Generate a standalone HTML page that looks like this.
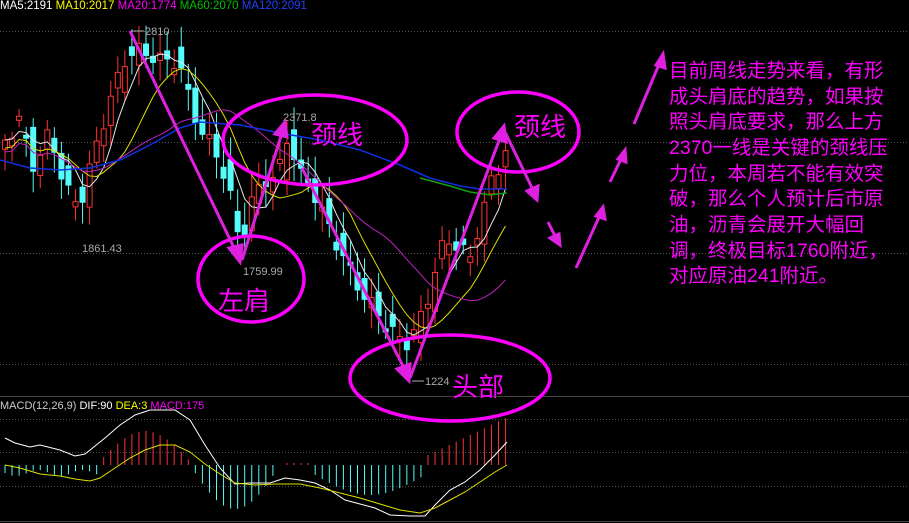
<!DOCTYPE html>
<html><head><meta charset="utf-8"><style>
html,body{margin:0;padding:0;background:#000;width:909px;height:523px;overflow:hidden}
svg{display:block}
.t{font-family:"Liberation Sans",sans-serif;font-size:11px}
.cn{font-family:"Liberation Sans","Noto Sans CJK SC",sans-serif;fill:#ff00ff}
</style></head><body>
<svg id="s" width="909" height="523" xmlns="http://www.w3.org/2000/svg">
<rect width="909" height="523" fill="#000"/>
<g stroke="#555" stroke-dasharray="1,2" stroke-width="1">
<line x1="0" y1="31.5" x2="909" y2="31.5"/><line x1="0" y1="142.5" x2="909" y2="142.5"/>
<line x1="0" y1="253.5" x2="909" y2="253.5"/><line x1="0" y1="364.5" x2="909" y2="364.5"/>
<line x1="0" y1="419.5" x2="909" y2="419.5"/><line x1="0" y1="452.5" x2="909" y2="452.5"/>
<line x1="0" y1="486.5" x2="909" y2="486.5"/>
</g>
<line x1="0" y1="396.5" x2="909" y2="396.5" stroke="#444"/>
<line x1="0" y1="521.5" x2="909" y2="521.5" stroke="#444"/>
<g id="cand"></g>
<g id="mac"></g>
<polyline fill="none" stroke="#1030e0" stroke-width="1.5" points="0,160 30,168 60,170 90,168 120,160 150,145 180,128 200,122 240,125 280,133 320,140 360,150 400,165 430,178 460,186 480,189 507,189"/>
<polyline fill="none" stroke="#10a010" stroke-width="1.5" points="420,178 450,186 470,192 490,195 507,193"/>
<polyline fill="none" stroke="#ffffff" stroke-width="1" points="5,438 15,443 30,447 40,445 60,450 75,456 85,454 95,446 105,438 120,425 135,415 150,410 175,410 190,420 205,445 220,468 235,484 250,483 270,483 285,478 300,480 315,483 330,490 345,500 360,504 375,508 390,515 410,516 425,516 435,505 450,490 465,482 480,470 495,455 507,442"/>
<polyline fill="none" stroke="#e0e000" stroke-width="1" points="5,465 20,468 40,474 60,476 75,479 90,481 100,478 115,468 130,458 145,450 160,445 175,445 190,452 205,464 220,474 235,483 255,485 275,484 300,484 320,488 340,493 360,498 380,504 400,510 420,513 435,508 450,500 465,492 480,482 495,472 507,465"/>
<g class="t" fill="#fff">
<text x="0" y="9" font-size="11.5"><tspan fill="#fff">MA5:2191</tspan> <tspan fill="#ffff00">MA10:2017</tspan> <tspan fill="#ff00ff">MA20:1774</tspan> <tspan fill="#00c000">MA60:2070</tspan> <tspan fill="#2040ff">MA120:2091</tspan></text>
<text x="0" y="409" fill="#ccc">MACD(12,26,9) <tspan fill="#fff">DIF:90</tspan> <tspan fill="#ffff00">DEA:3</tspan> <tspan fill="#ff00ff">MACD:175</tspan></text>
<text x="145" y="35" fill="#aaa">2810</text>
<text x="82" y="252" fill="#aaa">1861.43</text>
<text x="243" y="275" fill="#aaa">1759.99</text>
<text x="283" y="121" fill="#aaa">2371.8</text>
<text x="425" y="385" fill="#aaa">1224</text>
</g>
<g stroke="#aaa" stroke-width="1"><line x1="132" y1="31" x2="144" y2="31"/><line x1="412" y1="381" x2="424" y2="381"/></g>
<g fill="none" stroke="#ff00ff" stroke-width="3.5">
<ellipse cx="251" cy="279" rx="53" ry="43"/>
<ellipse cx="315" cy="140" rx="92" ry="45"/>
<ellipse cx="518" cy="132" rx="61" ry="40"/>
<ellipse cx="450" cy="378" rx="100" ry="43"/>
</g>
<g stroke="#e020e0" stroke-width="3" fill="#e020e0">
<line x1="130" y1="31" x2="236" y2="252"/><polygon points="240,262 229,248 242,245"/>
<line x1="242" y1="260" x2="282" y2="133"/><polygon points="285,122 287,137 275,134"/>
<line x1="302" y1="168" x2="405" y2="370"/><polygon points="409,381 397,369 410,364"/>
<line x1="410" y1="378" x2="500" y2="138"/><polygon points="504,126 506,142 494,138"/>
<line x1="505" y1="132" x2="534" y2="192"/><polygon points="537,200 527,191 538,186"/>
<line x1="548" y1="222" x2="556" y2="238"/><polygon points="560,245 550,238 559,234"/>
<line x1="576" y1="268" x2="600" y2="215"/><polygon points="603,207 605,219 596,216"/>
<line x1="610" y1="182" x2="622" y2="157"/><polygon points="625,150 626,162 618,159"/>
<line x1="634" y1="124" x2="660" y2="62"/><polygon points="663,54 665,68 656,65"/>
</g>
<g class="cn" font-size="26">
<text x="218" y="310">左肩</text>
<text x="311" y="144">颈线</text>
<text x="514" y="136">颈线</text>
<text x="452" y="396">头部</text>
</g>
<g class="cn" font-size="19.5">
<text x="669" y="77">目前周线走势来看，有形</text>
<text x="669" y="103">成头肩底的趋势，如果按</text>
<text x="669" y="128">照头肩底要求，那么上方</text>
<text x="669" y="154">2370一线是关键的颈线压</text>
<text x="669" y="180">力位，本周若不能有效突</text>
<text x="669" y="205">破，那么个人预计后市原</text>
<text x="669" y="231">油，沥青会展开大幅回</text>
<text x="669" y="257">调，终极目标1760附近，</text>
<text x="669" y="282">对应原油241附近。</text>
</g>
</svg>
<script>
(function(){
var NS="http://www.w3.org/2000/svg";
function el(p,t,a){var e=document.createElementNS(NS,t);for(var k in a)e.setAttribute(k,a[k]);p.appendChild(e);return e;}
var kp=[[5,140],[20,120],[35,170],[50,130],[65,190],[80,205],[95,150],[110,100],[125,60],[135,50],[150,55],[165,62],[178,60],[188,95],[200,130],[215,150],[228,185],[240,245],[252,200],[265,180],[278,175],[288,135],[300,175],[315,195],[330,230],[345,260],[360,290],[375,310],[390,330],[405,345],[415,330],[425,310],[435,270],[445,240],[458,245],[470,260],[480,220],[492,180],[500,165],[507,145]];
function py(x){for(var i=1;i<kp.length;i++){if(x<=kp[i][0]){var a=kp[i-1],b=kp[i];return a[1]+(b[1]-a[1])*(x-a[0])/(b[0]-a[0]);}}return kp[kp.length-1][1];}
var g=document.getElementById("cand");
var closes=[],xs=[];
for(var i=0;i<72;i++){
 var x=5+i*7.05;xs.push(x);
 var c=py(x),o=py(x-7)+Math.sin(i*2.7)*14;
 c+=Math.sin(i*1.9)*8;
 closes.push(c);
 var up=c<o, bt=Math.min(o,c), bb=Math.max(o,c);
 if(bb-bt<4)bb=bt+4;
 var hi=bt-6-Math.abs(Math.sin(i*3.1))*16, lo=bb+5+Math.abs(Math.cos(i*2.3))*16;
 var col=up?"#ff3232":"#54fcfc";
 el(g,"line",{x1:x,y1:hi,x2:x,y2:lo,stroke:col,"stroke-width":1});
 if(up)el(g,"rect",{x:x-2.5,y:bt,width:5,height:bb-bt,fill:"#000",stroke:col,"stroke-width":1});
 else el(g,"rect",{x:x-3,y:bt,width:6,height:bb-bt,fill:col});
}
function ma(n,col,sh){var pts=[];for(var i=0;i<closes.length;i++){var s=0,m=0;for(var j=Math.max(0,i-n+1);j<=i;j++){s+=closes[j];m++;}pts.push(xs[i]+","+(s/m+sh));}el(g,"polyline",{points:pts.join(" "),fill:"none",stroke:col,"stroke-width":1});}
ma(5,"#e8e8e8",0);ma(10,"#e0e000",8);ma(20,"#c020c0",12);
var mg=document.getElementById("mac");
for(var i=0;i<72;i++){
 var x=xs[i],v;
 if(x<100)v=-8-Math.sin(i)*3;
 else if(x<190)v=4+30*Math.sin((x-100)/90*Math.PI);
 else if(x<280)v=-44*Math.sin((x-190)/90*Math.PI);
 else if(x<312)v=2;
 else if(x<428)v=-8-22*Math.sin((x-312)/116*Math.PI);
 else v=10+((x-428)/80)*38;
 el(mg,"line",{x1:x,y1:465,x2:x,y2:465-v,stroke:v>0?"#ff3232":"#54fcfc","stroke-width":1});
}
})();
</script>
</body></html>
